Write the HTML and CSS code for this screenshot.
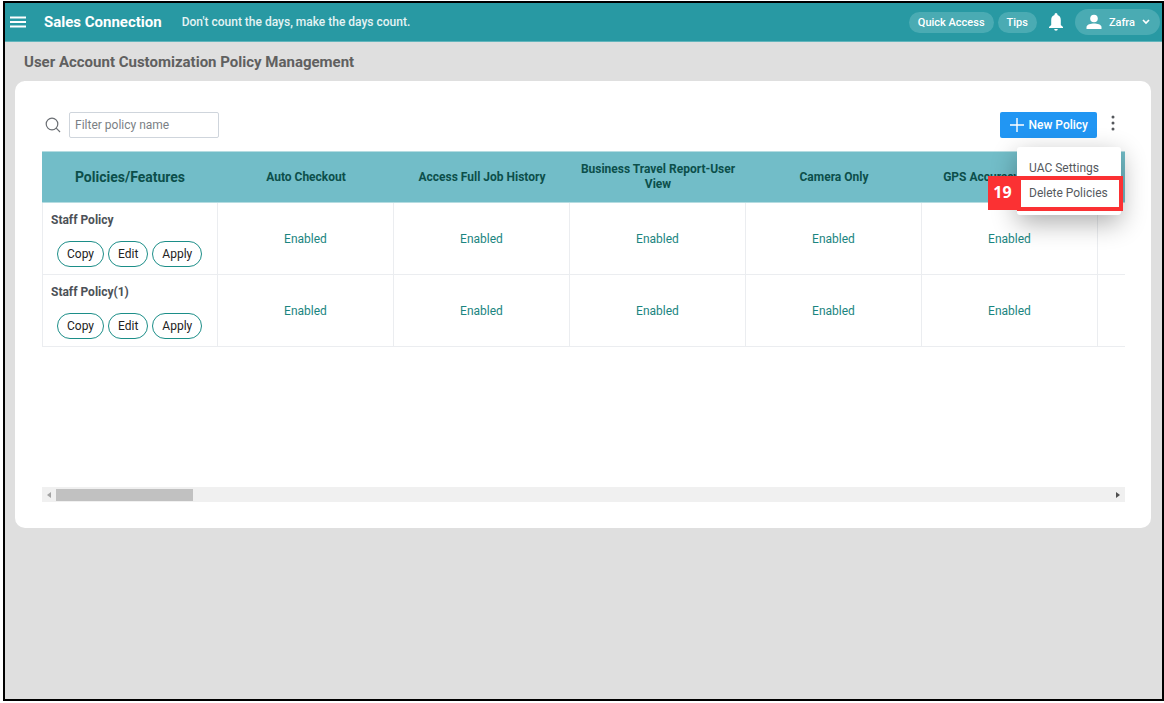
FILE: index.html
```html
<!DOCTYPE html>
<html lang="en">
<head>
<meta charset="utf-8">
<title>User Account Customization Policy Management</title>
<link rel="stylesheet" href="styles.css">
</head>
<body>
<div class="frame">
  <header class="topbar">
    <button class="icon-btn" aria-label="Menu">
      <svg width="18" height="12" viewBox="0 0 18 12"><path d="M1 1.500h16M1 6h16M1 10.500h16" stroke="#fff" stroke-width="2.200"/></svg>
    </button>
    <a class="brand" href="#">Sales Connection</a>
    <span class="motto">Don't count the days, make the days count.</span>
    <nav class="actions">
      <button class="chip">Quick Access</button>
      <button class="chip">Tips</button>
      <button class="icon-btn bell" aria-label="Notifications">
        <svg width="14" height="18" viewBox="0 0 14 18"><path d="M7 0a1.500 1.500 0 0 0-1.500 1.500v.6C3.300 2.700 2.200 4.700 2.200 7.200V12L0 14v1h14v-1l-2.200-2V7.200c0-2.500-1.100-4.500-3.300-5.100v-.6A1.500 1.500 0 0 0 7 0zM5.200 16a1.800 1.800 0 0 0 3.600 0z" fill="#fff"/></svg>
      </button>
      <button class="chip user">
        <svg width="16" height="16" viewBox="0 0 16 16"><circle cx="8" cy="4.500" r="3.800" fill="#fff"/><path d="M.5 15v-2c0-2.600 4.500-3.600 7.500-3.600s7.500 1 7.500 3.600v2z" fill="#fff"/></svg>
        <span>Zafra</span>
        <svg width="8" height="6" viewBox="0 0 8 6"><path d="M1 1l3 3 3-3" fill="none" stroke="#fff" stroke-width="1.700"/></svg>
      </button>
    </nav>
  </header>
  <main class="page">
    <h1 class="title">User Account Customization Policy Management</h1>
    <section class="card">
      <div class="toolbar">
        <label for="filter" class="search" aria-label="Filter policy name">
          <svg width="16" height="16" viewBox="0 0 16 16"><circle cx="7" cy="7" r="5.800" fill="none" stroke="#6a6e73" stroke-width="1.200"/><path d="M11.200 11.200l3.800 3.800" stroke="#6a6e73" stroke-width="1.200"/></svg>
        </label>
        <input id="filter" class="filter" type="text" placeholder="Filter policy name">
        <button class="new-policy">
          <svg width="14" height="14" viewBox="0 0 14 14"><path d="M7 0v14M0 7h14" stroke="#fff" stroke-width="1.400"/></svg>
          New Policy
        </button>
        <div class="more">
          <button class="icon-btn" aria-label="More options">
            <svg width="4" height="16" viewBox="0 0 4 16"><g fill="#55585c"><circle cx="2" cy="2" r="1.500"/><circle cx="2" cy="8" r="1.500"/><circle cx="2" cy="14" r="1.500"/></g></svg>
          </button>
          <div class="menu">
            <button class="menu-item">UAC Settings</button>
            <button class="menu-item marked">Delete Policies<span class="step">19</span></button>
          </div>
        </div>
      </div>
      <div class="table-wrap">
        <table class="policies">
          <thead>
            <tr><th class="first">Policies/Features</th><th>Auto Checkout</th><th>Access Full Job History</th><th>Business Travel Report-User View</th><th>Camera Only</th><th>GPS Accuracy Threshold</th><th></th></tr>
          </thead>
          <tbody>
            <tr>
              <td class="policy"><div class="name">Staff Policy</div><div class="pills"><button class="pill">Copy</button><button class="pill">Edit</button><button class="pill">Apply</button></div></td>
              <td>Enabled</td><td>Enabled</td><td>Enabled</td><td>Enabled</td><td>Enabled</td><td></td>
            </tr>
            <tr>
              <td class="policy"><div class="name">Staff Policy(1)</div><div class="pills"><button class="pill">Copy</button><button class="pill">Edit</button><button class="pill">Apply</button></div></td>
              <td>Enabled</td><td>Enabled</td><td>Enabled</td><td>Enabled</td><td>Enabled</td><td></td>
            </tr>
          </tbody>
        </table>
      </div>
      <div class="scrollbar">
        <svg width="4" height="6" viewBox="0 0 4 6"><path d="M4 0v6L0 3z" fill="#a3a3a3"/></svg>
        <div class="track"><div class="thumb"></div></div>
        <svg width="4" height="6" viewBox="0 0 4 6"><path d="M0 0v6l4-3z" fill="#505050"/></svg>
      </div>
    </section>
  </main>
</div>
</body>
</html>
```
FILE: styles.css
```css
* { box-sizing: border-box; }
body {
  margin: 0;
  padding: 1px 0 2px 3px;
  min-height: 100vh;
  display: flex;
  background: #fff;
  font-family: Roboto, sans-serif;
  font-size: 12px;
}
button { font: inherit; border: 0; cursor: pointer; }
svg { display: block; flex: none; }
.frame {
  flex: 1;
  min-width: 0;
  border: 2px solid #000;
  background: #dfdfdf;
}
.topbar {
  display: flex;
  align-items: center;
  height: 39px;
  padding: 0 2px 0 4px;
  background: #2899a3;
  border-bottom: 1px solid #62b5bc;
  color: #fff;
}
.icon-btn { padding: 0; background: none; }
.brand {
  margin-left: 17px;
  font-size: 15px;
  font-weight: 700;
  color: #fff;
  text-decoration: none;
}
.motto { margin-left: 20px; font-weight: 500; color: #e4f3f4; }
.actions { display: flex; align-items: center; gap: 4px; margin-left: auto; }
.chip {
  height: 21px;
  padding: 0 9px;
  border-radius: 13px;
  background: #4aabb3;
  color: #fff;
  font-size: 11px;
  font-weight: 500;
}
.bell { margin: 0 8px; }
.user {
  display: flex;
  align-items: center;
  gap: 7px;
  height: 26px;
  padding: 0 10px 0 11px;
}
.page { padding: 10px 11px 0 10px; }
.title {
  margin: 0 0 9px 9px;
  font-size: 15px;
  line-height: 20px;
  font-weight: 700;
  color: #606060;
}
.card {
  padding: 30px 26px 26px 27px;
  border-radius: 10px;
  background: #fff;
}
.toolbar { display: flex; align-items: center; height: 27px; }
.search { margin: 0 8px 0 3px; }
.filter {
  width: 150px;
  height: 26px;
  padding: 0 5px;
  border: 1px solid #cfd5dc;
  border-radius: 2px;
  font: inherit;
  color: #444;
}
.filter::placeholder { color: #7b7f85; opacity: 1; }
.new-policy {
  display: flex;
  align-items: center;
  gap: 5px;
  height: 26px;
  margin-left: auto;
  padding: 0 9px 0 10px;
  border-radius: 2px;
  background: #2196f3;
  color: #fff;
  font-weight: 500;
}
.more { position: relative; margin: 0 10px 0 14px; }
.menu {
  position: absolute;
  z-index: 2;
  top: 32px;
  right: -6px;
  width: 104px;
  padding: 8px 0 10px;
  border-radius: 3px;
  background: #fff;
  box-shadow: 0 8px 26px rgba(0, 0, 0, .32);
}
.menu-item {
  position: relative;
  display: block;
  width: 100%;
  height: 25px;
  padding: 0 0 0 12px;
  background: none;
  color: #55595e;
  text-align: left;
  white-space: nowrap;
}
.marked::after {
  content: "";
  position: absolute;
  inset: -4px -2px -6px 0;
  border: 4px solid #fb3133;
}
.step {
  position: absolute;
  right: 100%;
  top: -4px;
  width: 29px;
  height: 34px;
  background: #fb3133;
  color: #fff;
  font: 700 16px/32px "Open Sans", sans-serif;
  text-align: center;
}
.table-wrap { height: 336px; margin-top: 13px; overflow: hidden; }
.policies {
  width: 1232px;
  table-layout: fixed;
  border-collapse: separate;
  border-spacing: 0;
}
th {
  height: 52px;
  padding: 0 8px;
  border: solid #b5dce1;
  border-width: 1px 0;
  background: #72bdc8;
  color: #0c4f4b;
  line-height: 15px;
  font-weight: 700;
}
th.first { font-size: 14px; }
td {
  height: 72px;
  padding: 0;
  border: solid #ebedf0;
  border-width: 0 1px 1px 0;
  color: #1b8580;
  text-align: center;
}
td.policy {
  padding: 0 8px;
  border-left: 1px solid #ebedf0;
  text-align: left;
}
.name { margin: 2px 0 13px; line-height: 15px; font-weight: 700; color: #4c5157; }
.pills { display: flex; gap: 4px; padding-left: 6px; }
.pill {
  height: 26px;
  padding: 0 9px;
  border: 1px solid #1c8e88;
  border-radius: 13px;
  background: #fff;
  color: #222;
}
.scrollbar {
  display: flex;
  align-items: center;
  gap: 5px;
  height: 15px;
  padding: 0 5px;
  background: #f0f0f0;
}
.track { flex: 1; }
.thumb { width: 13%; height: 12px; background: #c1c1c1; }
```
